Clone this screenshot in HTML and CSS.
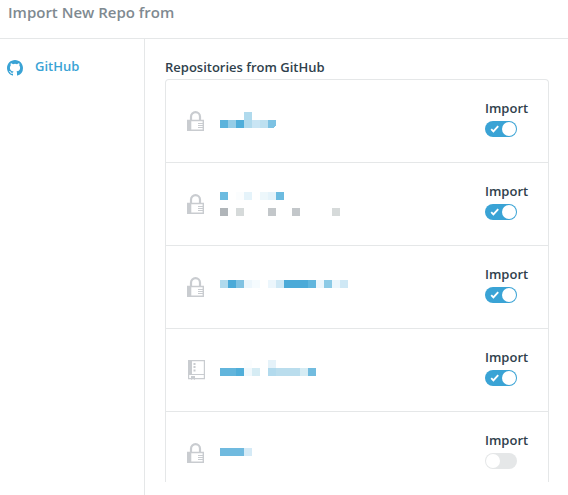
FILE: index.html
```html
<!DOCTYPE html>
<html lang="en">
<head>
<meta charset="utf-8">
<title>Import New Repo</title>
<link rel="stylesheet" href="styles.css">
</head>
<body>
<svg class="defs" aria-hidden="true">
  <symbol id="lock" viewBox="0 0 17 20">
    <path d="M4 9V5.700a4.500 4.500 0 0 1 9 0V9" fill="none" stroke="#c9ccd0" stroke-width="2.200"/>
    <path d="M.7 9.500h15.600v9.800H.7z" fill="#fff" stroke="#c9ccd0" stroke-width="1.400"/>
    <path d="M0 9h4.300v11H0z" fill="#c9ccd0"/>
    <path d="M11 12.500h5M11 14.500h5M11 16.500h5" stroke="#c9ccd0"/>
  </symbol>
  <symbol id="book" viewBox="0 0 17 20">
    <path d="M.6.600h15.800v18H.6zM1 14.500h15" fill="#fff" stroke="#c9ccd0" stroke-width="1.200"/>
    <path d="M0 0h4v14H0zM5.500 3h2v2h-2zM5.500 6h2v2h-2zM5.500 9.500h2v2h-2zM3 16h4v4l-2-1.200L3 20z" fill="#c9ccd0"/>
  </symbol>
</svg>
<header class="header"><h1>Import New Repo from</h1></header>
<main class="layout">
  <nav class="sidebar">
    <a class="source">
      <svg width="16" height="16" viewBox="0 0 16 16"><path fill="#3aa3d5" d="M8 0C3.580 0 0 3.580 0 8c0 3.540 2.290 6.530 5.470 7.590.4.070.55-.17.55-.38 0-.19-.01-.82-.01-1.490-2.010.37-2.530-.49-2.690-.94-.09-.23-.48-.94-.82-1.130-.28-.15-.68-.52-.01-.53.63-.01 1.080.58 1.230.82.72 1.210 1.870.87 2.330.66.070-.52.28-.87.51-1.070-1.780-.2-3.640-.89-3.640-3.950 0-.87.31-1.590.82-2.150-.08-.2-.36-1.020.08-2.120 0 0 .67-.21 2.200.82a7.500 7.500 0 0 1 4 0c1.530-1.040 2.200-.82 2.200-.82.44 1.100.16 1.920.08 2.120.51.56.82 1.270.82 2.150 0 3.070-1.870 3.750-3.650 3.950.29.25.54.73.54 1.480 0 1.070-.01 1.930-.01 2.200 0 .21.150.46.55.38A8 8 0 0 0 16 8c0-4.420-3.580-8-8-8z"/></svg>
      <span>GitHub</span>
    </a>
  </nav>
  <section class="content">
    <h2>Repositories from GitHub</h2>
    <ul class="repos">
      <li class="repo">
        <svg class="icon"><use href="#lock"/></svg>
        <svg class="name" viewBox="0 0 128 82" shape-rendering="crispEdges"><path fill="#5bb3dc" d="M0 40h8v8H0z"/><path fill="#95cde7" d="M8 40h8v8H8z"/><path fill="#4faeda" d="M16 40h8v8h-8z"/><path fill="#b0daed" d="M24 32h8v16h-8z"/><path fill="#c9e5f4" d="M32 40h8v8h-8z"/><path fill="#bde0f0" d="M40 40h8v8h-8z"/><path fill="#7dc2e3" d="M48 40h8v5l-3 3h-5z"/></svg>
        <label class="toggle on"><span>Import</span><i class="switch"><svg viewBox="0 0 10 8"><path d="M1.200 4.200l2.200 2.200L8.200 1.200"/></svg></i></label>
      </li>
      <li class="repo">
        <svg class="icon"><use href="#lock"/></svg>
        <svg class="name" viewBox="0 0 128 82" shape-rendering="crispEdges"><path fill="#6cbbe0" d="M0 29h8v8H0zM56 29h8v8h-8z"/><path fill="#fbfdfe" d="M16 29h8v8h-8z"/><path fill="#e5f3fa" d="M24 29h8v8h-8zM48 29h8v8h-8z"/><path fill="#edf7fb" d="M40 29h8v8h-8z"/><path fill="#b0b5b9" d="M0 45h8v8H0z"/><path fill="#d6dada" d="M16 45h8v8h-8zM112 45h8v8h-8z"/><path fill="#c3c7ca" d="M48 45h8v8h-8zM72 45h8v8h-8z"/></svg>
        <label class="toggle on"><span>Import</span><i class="switch"><svg viewBox="0 0 10 8"><path d="M1.200 4.200l2.200 2.200L8.200 1.200"/></svg></i></label>
      </li>
      <li class="repo">
        <svg class="icon"><use href="#lock"/></svg>
        <svg class="name" viewBox="0 0 128 82" shape-rendering="crispEdges"><path fill="#b0daed" d="M0 34h8v8H0z"/><path fill="#4baad8" d="M8 34h8v8H8zM64 34h24v8H64z"/><path fill="#80c2e2" d="M16 34h8v8h-8z"/><path fill="#ecf6fc" d="M24 34h8v8h-8zM48 34h8v8h-8zM96 34h8v8h-8zM112 34h8v8h-8z"/><path fill="#f5fbfe" d="M32 34h8v8h-8z"/><path fill="#cfe8f5" d="M56 34h8v8h-8zM120 34h8v8h-8z"/><path fill="#5fb5dd" d="M88 34h8v8h-8z"/><path fill="#8ccae6" d="M104 34h8v8h-8z"/></svg>
        <label class="toggle on"><span>Import</span><i class="switch"><svg viewBox="0 0 10 8"><path d="M1.200 4.200l2.200 2.200L8.200 1.200"/></svg></i></label>
      </li>
      <li class="repo">
        <svg class="icon book"><use href="#book"/></svg>
        <svg class="name" viewBox="0 0 128 82" shape-rendering="crispEdges"><path fill="#62b5dc" d="M0 39h16v8H0z"/><path fill="#50aed9" d="M16 39h8v8h-8z"/><path fill="#fbfdfe" d="M24 31h8v8h-8z"/><path fill="#f0f8fc" d="M24 39h8v8h-8z"/><path fill="#d6ecf4" d="M32 39h8v8h-8zM80 39h8v8h-8z"/><path fill="#e5f2f9" d="M48 31h8v8h-8z"/><path fill="#b2daed" d="M48 39h8v8h-8z"/><path fill="#badded" d="M56 39h24v8H56z"/><path fill="#72bcdf" d="M88 39h8v8h-8z"/></svg>
        <label class="toggle on"><span>Import</span><i class="switch"><svg viewBox="0 0 10 8"><path d="M1.200 4.200l2.200 2.200L8.200 1.200"/></svg></i></label>
      </li>
      <li class="repo">
        <svg class="icon"><use href="#lock"/></svg>
        <svg class="name" viewBox="0 0 128 82" shape-rendering="crispEdges"><path fill="#70badf" d="M0 36h24v8H0z"/><path fill="#d5eaf6" d="M24 36h8v8h-8z"/></svg>
        <label class="toggle"><span>Import</span><i class="switch"></i></label>
      </li>
    </ul>
  </section>
</main>
</body>
</html>
```

FILE: styles.css
```css
* { box-sizing: border-box; }
body {
  margin: 0;
  height: 495px;
  overflow: hidden;
  display: flex;
  flex-direction: column;
  background: #fff;
  color: #2f414c;
  font: 600 13px/18px "Open Sans", sans-serif;
}
h1, h2 { margin: 0; font-weight: 600; }
.defs { display: none; }
.header {
  height: 39px;
  flex: none;
  padding: 2px 8px;
  border-bottom: 1px solid #e5e7e8;
}
.header h1 { font-size: 15px; line-height: 20px; color: #7f8a91; }
.layout { display: flex; height: 456px; }
.sidebar {
  width: 145px;
  flex: none;
  border-right: 1px solid #e5e7e8;
  padding: 18px 7px;
}
.source { display: flex; gap: 12px; color: #3aa3d5; }
.source svg { margin-top: 3px; }
.content { width: 404px; padding: 19px 0 0 20px; }
.content h2 { font-size: 13px; line-height: 18px; margin-bottom: 3px; }
.repos {
  list-style: none;
  margin: 0;
  padding: 0;
  height: 403px;
  overflow: hidden;
  border: 1px solid #e5e7e8;
  border-bottom: 0;
  border-radius: 4px 4px 0 0;
}
.repo {
  display: flex;
  height: 83px;
  padding: 0 20px 0 21px;
  border-bottom: 1px solid #e5e7e8;
}
.icon { width: 17px; height: 20px; margin-top: 31px; flex: none; }
.icon.book { margin-left: 1px; margin-right: -1px; }
.name { width: 128px; height: 82px; margin-left: 16px; flex: none; }
.toggle { margin-left: auto; width: 43px; padding-top: 19px; }
.toggle span { display: block; line-height: 18px; white-space: nowrap; }
.switch {
  display: flex;
  align-items: center;
  justify-content: space-between;
  width: 32px;
  height: 16px;
  margin-top: 4px;
  padding: 1px;
  border-radius: 8px;
  background: #e5e7e8;
}
.switch::after { content: ""; width: 14px; height: 14px; border-radius: 50%; background: #fff; }
.switch svg { width: 10px; height: 8px; margin-left: 4px; fill: none; stroke: #fff; stroke-width: 1.900; }
.on .switch { background: #3aa3d5; }
```
